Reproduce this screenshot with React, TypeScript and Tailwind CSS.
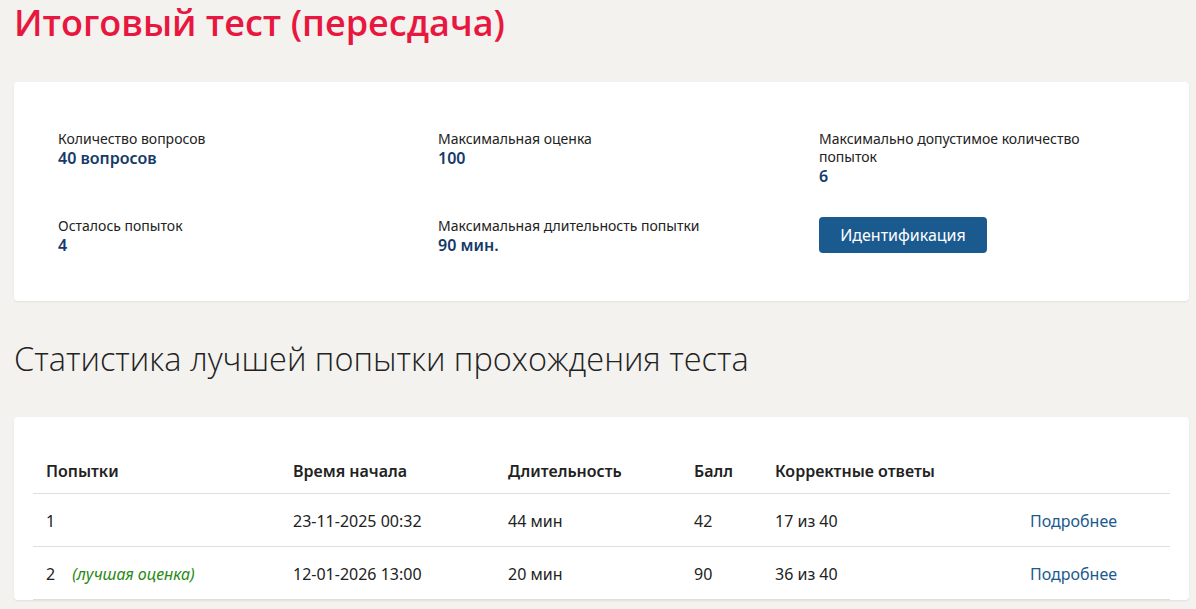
const body = { fontFamily: '"Noto Sans", "Open Sans", sans-serif' };
const head = { fontFamily: '"Open Sans", "Noto Sans", sans-serif' };

const stats = [
  { label: "Количество вопросов", value: "40 вопросов" },
  { label: "Максимальная оценка", value: "100" },
  { label: "Максимально допустимое количество попыток", value: "6" },
  { label: "Осталось попыток", value: "4" },
  { label: "Максимальная длительность попытки", value: "90 мин." },
];

const attempts = [
  { n: "1", best: false, start: "23-11-2025 00:32", dur: "44 мин", score: "42", correct: "17 из 40" },
  { n: "2", best: true, start: "12-01-2026 13:00", dur: "20 мин", score: "90", correct: "36 из 40" },
];

const Stat = ({ label, value }: { label: string; value: string }) => (
  <div className="w-[300px]">
    <div className="text-[14px] leading-[18px] text-[#222]">{label}</div>
    <div className="text-[16px] leading-[20px] font-semibold text-[#163a68]">{value}</div>
  </div>
);

export default function App() {
  return (
    <div className="min-h-screen bg-[#f3f2ef] pl-[14px] pr-[7px] pb-10" style={body}>
      <h1 className="text-[36px] leading-[46px] font-semibold text-[#e8173f]" style={head}>
        Итоговый тест (пересдача)
      </h1>

      <div className="mt-[36px] bg-white rounded shadow-[0_1px_2px_rgba(0,0,0,0.08)] pl-[44px] pt-[48px] pb-[46px]">
        <div className="grid grid-cols-[380px_381px_1fr] gap-y-[31px]">
          <Stat {...stats[0]} />
          <Stat {...stats[1]} />
          <Stat {...stats[2]} />
          <Stat {...stats[3]} />
          <Stat {...stats[4]} />
          <div>
            <button
              type="button"
              className="h-[36px] w-[168px] rounded bg-[#1b5a8e] text-white text-[16px]"
            >
              Идентификация
            </button>
          </div>
        </div>
      </div>

      <h2 className="mt-[36px] text-[32.5px] leading-[44px] font-light text-[#222]" style={head}>
        Статистика лучшей попытки прохождения теста
      </h2>

      <div className="mt-[36px] bg-white rounded shadow-[0_1px_2px_rgba(0,0,0,0.08)] px-[19px] pt-[32px]">
        <table className="w-full table-fixed border-collapse text-[16px] text-[#222]">
          <thead>
            <tr className="border-b border-[#dfdedb] h-[44px] text-left">
              <th className="w-[260px] pl-[13px] font-semibold">Попытки</th>
              <th className="w-[215px] font-semibold">Время начала</th>
              <th className="w-[186px] font-semibold">Длительность</th>
              <th className="w-[81px] font-semibold">Балл</th>
              <th className="w-[255px] font-semibold">Корректные ответы</th>
              <th></th>
            </tr>
          </thead>
          <tbody>
            {attempts.map((a) => (
              <tr key={a.n} className="border-b border-[#dfdedb] h-[53px] [&>td]:pt-[3px]">
                <td className="pl-[13px]">
                  {a.n}
                  {a.best && (
                    <span className="ml-[17px] italic text-[16px] text-[#2a8a14]">
                      (лучшая оценка)
                    </span>
                  )}
                </td>
                <td>{a.start}</td>
                <td>{a.dur}</td>
                <td>{a.score}</td>
                <td>{a.correct}</td>
                <td className="text-[#1b5a8e]">Подробнее</td>
              </tr>
            ))}
          </tbody>
        </table>
      </div>
    </div>
  );
}
